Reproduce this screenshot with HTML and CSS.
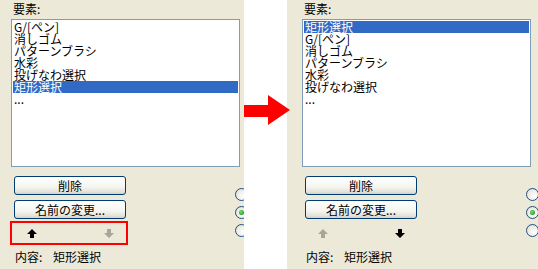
FILE: index.html
```html
<!DOCTYPE html>
<html lang="ja">
<head>
<meta charset="utf-8">
<link rel="stylesheet" href="styles.css">
</head>
<body>
<div class="stage">
  <section class="panel panel-left">
    <div class="dialog">
      <div class="label">要素:</div>
      <ul class="list">
        <li>G/[ペン]</li>
        <li>消しゴム</li>
        <li>パターンブラシ</li>
        <li>水彩</li>
        <li>投げなわ選択</li>
        <li class="sel">矩形選択</li>
        <li>...</li>
      </ul>
      <div class="lower">
        <div class="controls">
          <button class="btn">削除</button>
          <button class="btn">名前の変更...</button>
          <div class="arrows marked">
            <svg class="arr" width="10" height="9" viewBox="0 0 10 9"><polygon points="5,0 10,5 7,5 7,9 3,9 3,5 0,5" fill="#000"/></svg>
            <svg class="arr" width="10" height="9" viewBox="0 0 10 9"><polygon points="3,0 7,0 7,4 10,4 5,9 0,4 3,4" fill="#A7A69B"/></svg>
          </div>
        </div>
        <div class="radios">
          <span class="radio"></span>
          <span class="radio on"></span>
          <span class="radio"></span>
        </div>
      </div>
      <div class="content"><span class="ck">内容:</span><span>矩形選択</span></div>
    </div>
  </section>
  <div class="gap"></div>
  <section class="panel panel-right">
    <div class="dialog">
      <div class="label">要素:</div>
      <ul class="list">
        <li class="sel">矩形選択</li>
        <li>G/[ペン]</li>
        <li>消しゴム</li>
        <li>パターンブラシ</li>
        <li>水彩</li>
        <li>投げなわ選択</li>
        <li>...</li>
      </ul>
      <div class="lower">
        <div class="controls">
          <button class="btn">削除</button>
          <button class="btn">名前の変更...</button>
          <div class="arrows">
            <svg class="arr" width="10" height="9" viewBox="0 0 10 9"><polygon points="5,0 10,5 7,5 7,9 3,9 3,5 0,5" fill="#A7A69B"/></svg>
            <svg class="arr" width="10" height="9" viewBox="0 0 10 9"><polygon points="3,0 7,0 7,4 10,4 5,9 0,4 3,4" fill="#000"/></svg>
          </div>
        </div>
        <div class="radios">
          <span class="radio"></span>
          <span class="radio on"></span>
          <span class="radio"></span>
        </div>
      </div>
      <div class="content"><span class="ck">内容:</span><span>矩形選択</span></div>
    </div>
  </section>
  <svg class="big-arrow" width="46" height="31" viewBox="0 0 46 31"><polygon points="0,10 24,10 24,0 46,15 24,30 24,22 0,22" fill="#FF0000"/></svg>
</div>
</body>
</html>
```
FILE: styles.css
```css
html, body {
  margin: 0;
  padding: 0;
  background: #ffffff;
}
body {
  font-family: "Noto Sans CJK JP", "Liberation Sans", sans-serif;
  font-size: 12px;
  color: #000;
}
.stage {
  position: relative;
  display: flex;
  width: 538px;
  height: 269px;
  overflow: hidden;
}
.panel {
  background: #ECE9D8;
  height: 269px;
  overflow: hidden;
  flex: none;
}
.panel-left {
  width: 244px;
}
.gap {
  width: 43px;
  flex: none;
  background: #fff;
}
.panel-right {
  width: 251px;
}
.panel-right .dialog {
  margin-left: 4px;
}
.dialog {
  width: 260px;
  padding: 2px 0 0 11px;
  box-sizing: border-box;
}
.label {
  height: 17px;
  line-height: 14px;
  padding-left: 2px;
}
.list {
  list-style: none;
  margin: 0;
  width: 229px;
  height: 148px;
  box-sizing: border-box;
  border: 1px solid #7F9DB9;
  background: #fff;
  padding: 1px 1px 0 1px;
}
.list li {
  height: 12px;
  line-height: 12px;
  padding-left: 1px;
  white-space: nowrap;
}
.list li.sel {
  background: #316AC5;
  color: #fff;
}
.lower {
  display: flex;
  margin-top: 9px;
}
.controls {
  display: flex;
  flex-direction: column;
  margin-left: 3px;
  width: 112px;
}
.btn {
  display: block;
  width: 112px;
  height: 19px;
  margin: 0 0 5px 0;
  padding: 0;
  font: inherit;
  line-height: 16px;
  color: #000;
  border: 1px solid #003C74;
  border-radius: 3px;
  background: linear-gradient(#FFFFFF 0%, #F4F4F0 60%, #E3E1D8 88%, #D6D0C5 100%);
  text-align: center;
}
.btn + .btn {
  margin-bottom: 0;
}
.arrows {
  display: flex;
  justify-content: space-between;
  align-items: center;
  box-sizing: border-box;
  width: 118px;
  height: 24px;
  margin: 2px 0 0 -4px;
  padding: 0 12px 0 15px;
  border: 2px solid transparent;
}
.arrows.marked {
  border-color: #FF0000;
}
.arr {
  display: block;
  margin-top: 1px;
}
.radios {
  display: flex;
  flex-direction: column;
  gap: 5px;
  margin: 12px 0 0 109px;
}
.radio {
  display: block;
  width: 13px;
  height: 13px;
  box-sizing: border-box;
  border: 1px solid #1C5180;
  border-radius: 50%;
  background: radial-gradient(circle at 65% 65%, #FFFFFF 0%, #ECEBE3 60%, #D8D5CA 100%);
  position: relative;
}
.radio.on::after {
  content: "";
  position: absolute;
  left: 3px;
  top: 3px;
  width: 5px;
  height: 5px;
  border-radius: 50%;
  background: radial-gradient(circle at 40% 40%, #7BE07B, #21A121 70%);
}
.content {
  display: flex;
  margin-top: 5px;
  padding-left: 4px;
  line-height: 14px;
}
.ck {
  width: 38px;
}
.big-arrow {
  position: absolute;
  left: 244px;
  top: 95px;
}
```
